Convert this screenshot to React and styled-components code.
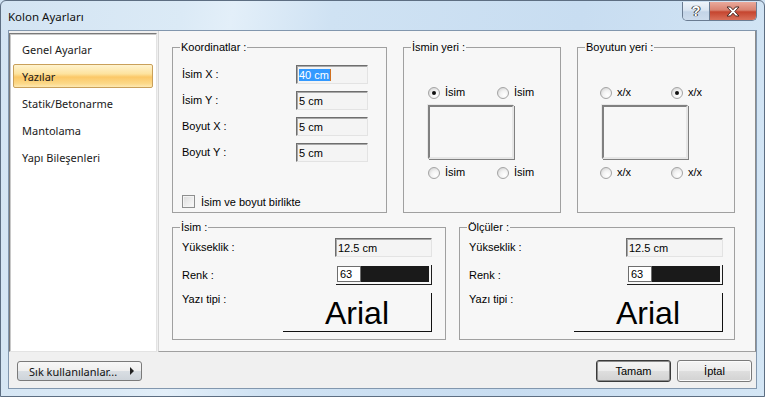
import { Fragment } from "react";
import styled, { createGlobalStyle } from "styled-components";

const Global = createGlobalStyle`
  html, body {
    margin: 0;
    padding: 0;
  }
  body {
    width: 765px;
    height: 397px;
    overflow: hidden;
    background: #cfe2f3;
    font-family: "Liberation Sans", Arial, sans-serif;
  }
  * {
    box-sizing: border-box;
  }
`;

const Window = styled.div`
  width: 765px;
  height: 397px;
  display: flex;
  flex-direction: column;
  padding: 0 7px 7px 7px;
  border: 1px solid #5d6e82;
  border-radius: 6px 6px 0 0;
  background: linear-gradient(
    100deg,
    #d3e4f3 0%,
    #dbeaf6 22%,
    #e3eff9 28%,
    #cfe2f3 40%,
    #c8ddf1 70%,
    #d4e6f5 100%
  );
`;

const TitleBar = styled.div`
  height: 29px;
  display: flex;
  justify-content: space-between;
  align-items: flex-start;
`;

const Title = styled.span`
  margin-top: 8px;
  font-family: "Noto Sans", "Open Sans", sans-serif;
  font-size: 11.5px;
  color: #111;
`;

const Caption = styled.div`
  display: flex;
  margin-top: 1px;
  border: 1px solid #6a7c92;
  border-top: none;
  border-radius: 0 0 5px 5px;
  overflow: hidden;
`;

const CaptionButton = styled.div`
  width: ${(p) => p.$w}px;
  height: 18px;
  display: flex;
  align-items: center;
  justify-content: center;
  background: ${(p) =>
    p.$close
      ? "linear-gradient(#e9a99b 0%, #d98371 45%, #c5452f 55%, #d9705a 100%)"
      : "linear-gradient(#eef4fa 0%, #dbe6f2 45%, #c3d4e7 55%, #cddcec 100%)"};
  border-left: ${(p) => (p.$close ? "1px solid #6a7c92" : "none")};
  color: #fff;
  font-family: "Liberation Sans", Arial, sans-serif;
  font-weight: bold;
  font-size: 14px;
  text-shadow: 0 0 1px #333, 0 0 1px #333, 1px 0 0 #444, -1px 0 0 #444;
`;

const Client = styled.div`
  flex: 1;
  display: flex;
  flex-direction: column;
  background: #f0f0f0;
  border: 1px solid #8297ae;
`;

const Body = styled.div`
  display: flex;
  height: 321px;
`;

const List = styled.div`
  width: 148px;
  margin-top: 2px;
  display: flex;
  flex-direction: column;
  padding: 3px 0 0 3px;
  background: #fff;
  border: 1px solid;
  border-color: #7a7a7a #e3e3e3 #e3e3e3 #7a7a7a;
  box-shadow: inset 1px 1px 0 #c8c8c8;
`;

const ListItem = styled.div`
  width: 140px;
  height: 24px;
  margin-bottom: 3px;
  padding-left: 8px;
  display: flex;
  align-items: center;
  font-family: "Noto Sans", "Open Sans", sans-serif;
  font-size: 11px;
  color: #1a1a1a;
  border-radius: 2px;
  border: 1px solid ${(p) => (p.$active ? "#c9a05a" : "transparent")};
  background: ${(p) =>
    p.$active
      ? "linear-gradient(#fff3cf 0%, #fde39e 40%, #fbc867 55%, #fcd989 85%, #fee9b3 100%)"
      : "transparent"};
`;

const Panel = styled.div`
  flex: 1;
  margin-left: 1px;
  padding: 10px 19px 0 13px;
  background: #f7f7f7;
  border-left: 1px solid #d6d6d6;
  border-bottom: 1px solid #a0a0a0;
  border-right: 1px solid #8c8c8c;
  display: flex;
  flex-direction: column;
  gap: 8px;
`;

const Row = styled.div`
  display: flex;
  gap: ${(p) => p.$gap}px;
`;

const Group = styled.fieldset`
  margin: 0;
  padding: 0 ${(p) => p.$pr ?? 9}px 0 9px;
  min-width: 0;
  width: ${(p) => p.$w}px;
  height: ${(p) => p.$h}px;
  border: 1px solid #a0a0a0;
  display: flex;
  flex-direction: column;
`;

const Legend = styled.legend`
  padding: 0 1px;
  margin-left: -2px;
  font-size: 11px;
  line-height: 13px;
  color: #000;
`;

const Label = styled.span`
  font-size: 11px;
  line-height: 13px;
  color: #000;
  align-self: ${(p) => (p.$top ? "start" : "center")};
`;

const FieldGrid = styled.div`
  margin-top: 11px;
  display: grid;
  grid-template-columns: 114px 72px;
  row-gap: 7px;
`;

const Input = styled.div`
  width: ${(p) => p.$w}px;
  height: 19px;
  padding: 0 2px;
  display: flex;
  align-items: center;
  justify-self: end;
  font-size: 11px;
  color: #000;
  background: #f4f4f4;
  border: 1px solid;
  border-color: #6e6e6e #e3e3e3 #e3e3e3 #6e6e6e;
  box-shadow: inset 1px 1px 0 #a8a8a8;
`;

const Selected = styled.span`
  background: #3399ff;
  color: #fff;
  padding-right: 1px;
  border-right: 1px solid #d07020;
`;

const CheckRow = styled.label`
  margin-top: 33px;
  display: flex;
  align-items: center;
  gap: 6px;
  font-size: 11px;
`;

const CheckBox = styled.span`
  width: 13px;
  height: 13px;
  border: 1px solid #8e8f8f;
  background: linear-gradient(135deg, #dcdcdc, #fbfbfb);
  box-shadow: inset 0 0 0 1px #f4f4f4;
`;

const Placement = styled.div`
  margin-top: 32px;
  padding-left: ${(p) => p.$inset}px;
  display: flex;
  flex-direction: column;
`;

const RadioRow = styled.div`
  display: grid;
  grid-template-columns: ${(p) => p.$col}px auto;
`;

const RadioItem = styled.div`
  display: flex;
  align-items: center;
  gap: 5px;
  font-size: 11px;
  line-height: 13px;
`;

const RadioDot = styled.span`
  width: 12px;
  height: 12px;
  border-radius: 50%;
  border: 1px solid #a4a4a4;
  background: radial-gradient(circle at 65% 70%, #ffffff 0%, #f2f2f2 45%, #c9c9c9 100%);
  display: flex;
  align-items: center;
  justify-content: center;

  &::after {
    content: "";
    width: 4px;
    height: 4px;
    border-radius: 50%;
    background: ${(p) => (p.$on ? "#111" : "transparent")};
  }
`;

const Frame = styled.div`
  width: 86px;
  height: 54px;
  margin: 6px 0 7px ${(p) => p.$shift}px;
  border: 2px solid;
  border-color: #808080 #e6e6e6 #e6e6e6 #808080;
  box-shadow: 1px 1px 0 #808080, -1px -1px 0 #e8e8e8;
  background: #f7f7f7;
`;

const TextGrid = styled.div`
  margin-top: 4px;
  display: grid;
  grid-template-columns: 1fr auto;
  row-gap: 8px;
`;

const Swatch = styled.div`
  width: 96px;
  height: 20px;
  justify-self: end;
  display: flex;
  padding: 1px 2px 2px 1px;
  border-right: 1px solid #1e1e1e;
  border-bottom: 1px solid #1e1e1e;
`;

const SwatchCode = styled.span`
  width: 24px;
  padding-left: 2px;
  display: flex;
  align-items: center;
  font-size: 11px;
  background: #fff;
  border: 1px solid #6e6e6e;
`;

const SwatchColor = styled.span`
  flex: 1;
  background: #1a1a1a;
`;

const FontBox = styled.div`
  width: 149px;
  height: 39px;
  justify-self: end;
  display: flex;
  align-items: flex-end;
  justify-content: center;
  font-family: "Liberation Sans", Arial, sans-serif;
  font-size: 32px;
  line-height: 36px;
  color: #000;
  border-right: 1px solid #111;
  border-bottom: 1px solid #111;
`;

const Footer = styled.div`
  flex: 1;
  display: flex;
  align-items: center;
  justify-content: space-between;
  padding: 2px 4px 0 8px;
`;

const MenuButton = styled.div`
  width: 125px;
  height: 20px;
  padding: 0 7px 0 11px;
  display: flex;
  align-items: center;
  justify-content: space-between;
  font-family: "Noto Sans", "Open Sans", sans-serif;
  font-size: 11px;
  color: #111;
  border: 1px solid #7a7a7a;
  border-radius: 3px;
  background: linear-gradient(#f7f7f7 0%, #efefef 48%, #d9dee3 52%, #ced4da 100%);
`;

const Arrow = styled.span`
  width: 0;
  height: 0;
  border-top: 4px solid transparent;
  border-bottom: 4px solid transparent;
  border-left: 4px solid #222;
`;

const Actions = styled.div`
  display: flex;
  gap: 6px;
`;

const Button = styled.div`
  width: 75px;
  height: 22px;
  display: flex;
  align-items: center;
  justify-content: center;
  font-size: 11px;
  color: #000;
  border-radius: 3px;
  border: 1px solid ${(p) => (p.$default ? "#3a3a3a" : "#7a7a7a")};
  box-shadow: inset 0 0 0 1px ${(p) => (p.$default ? "#8a8a8a" : "#fbfbfb")};
  background: linear-gradient(#f4f4f4 0%, #ececec 48%, #dedede 52%, #d2d2d2 100%);
`;

const menu = ["Genel Ayarlar", "Yazılar", "Statik/Betonarme", "Mantolama", "Yapı Bileşenleri"];

const coords = [
  ["İsim X :", "40 cm", true],
  ["İsim Y :", "5 cm"],
  ["Boyut X :", "5 cm"],
  ["Boyut Y :", "5 cm"],
];

function PlacementBox({ label, on, inset, col, shift }) {
  const radio = (i) => (
    <RadioItem>
      <RadioDot $on={on === i} />
      {label}
    </RadioItem>
  );
  return (
    <Placement $inset={inset}>
      <RadioRow $col={col}>
        {radio(0)}
        {radio(1)}
      </RadioRow>
      <Frame $shift={shift} />
      <RadioRow $col={col}>
        {radio(2)}
        {radio(3)}
      </RadioRow>
    </Placement>
  );
}

function TextGroup({ title, w, pr }) {
  return (
    <Group $w={w} $h={119} $pr={pr}>
      <Legend>{title}</Legend>
      <TextGrid>
        <Label>Yükseklik :</Label>
        <Input $w={97}>12.5 cm</Input>
        <Label>Renk :</Label>
        <Swatch>
          <SwatchCode>63</SwatchCode>
          <SwatchColor />
        </Swatch>
        <Label $top>Yazı tipi :</Label>
        <FontBox>Arial</FontBox>
      </TextGrid>
    </Group>
  );
}

export default function App() {
  return (
    <>
      <Global />
      <Window>
        <TitleBar>
          <Title>Kolon Ayarları</Title>
          <Caption>
            <CaptionButton $w={26}>?</CaptionButton>
            <CaptionButton $w={47} $close>
              <svg width="14" height="11" viewBox="0 0 14 11">
                <path
                  d="M1 1h3.5L7 3.8 9.5 1H13L8.8 5.5 13 10H9.5L7 7.2 4.5 10H1l4.2-4.5z"
                  fill="#fff"
                  stroke="#4a2a25"
                  strokeWidth="1"
                />
              </svg>
            </CaptionButton>
          </Caption>
        </TitleBar>
        <Client>
          <Body>
            <List>
              {menu.map((m) => (
                <ListItem key={m} $active={m === "Yazılar"}>
                  {m}
                </ListItem>
              ))}
            </List>
            <Panel>
              <Row $gap={16}>
                <Group $w={215} $h={172}>
                  <Legend>Koordinatlar :</Legend>
                  <FieldGrid>
                    {coords.map(([l, v, sel]) => (
                      <Fragment key={l}>
                        <Label>{l}</Label>
                        <Input $w={72}>{sel ? <Selected>{v}</Selected> : v}</Input>
                      </Fragment>
                    ))}
                  </FieldGrid>
                  <CheckRow>
                    <CheckBox />
                    İsim ve boyut birlikte
                  </CheckRow>
                </Group>
                <Group $w={158} $h={172}>
                  <Legend>İsmin yeri :</Legend>
                  <PlacementBox label="İsim" on={0} inset={15} col={69} shift={0} />
                </Group>
                <Group $w={158} $h={172}>
                  <Legend>Boyutun yeri :</Legend>
                  <PlacementBox label="x/x" on={1} inset={13} col={71} shift={2} />
                </Group>
              </Row>
              <Row $gap={13}>
                <TextGroup title="İsim :" w={274} pr={13} />
                <TextGroup title="Ölçüler :" w={276} pr={11} />
              </Row>
            </Panel>
          </Body>
          <Footer>
            <MenuButton>
              Sık kullanılanlar...
              <Arrow />
            </MenuButton>
            <Actions>
              <Button $default>Tamam</Button>
              <Button>İptal</Button>
            </Actions>
          </Footer>
        </Client>
      </Window>
    </>
  );
}
